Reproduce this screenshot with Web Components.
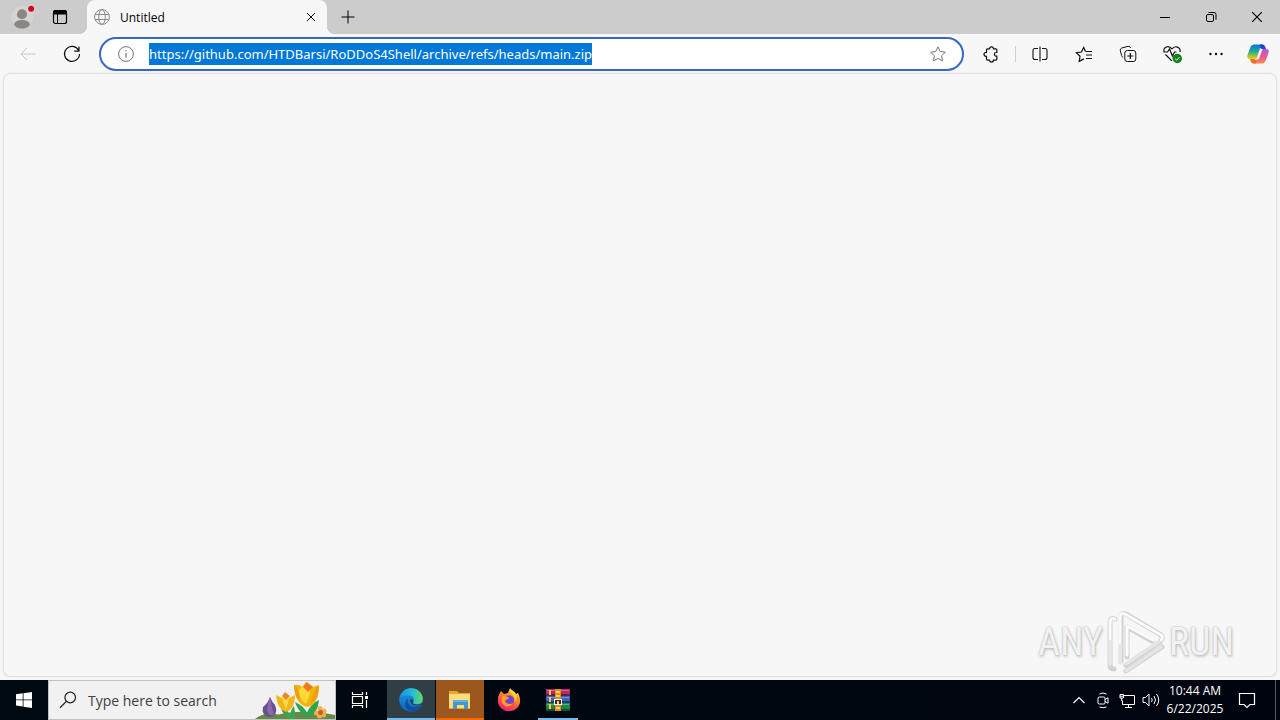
<!DOCTYPE html>
<html lang="en">
<head>
<meta charset="utf-8">
<title>Untitled</title>
<style>
html,body{margin:0;height:100%}
body{font-family:"Segoe UI","Open Sans","Noto Sans",sans-serif;font-size:12px;color:#1b1b1b;overflow:hidden}
</style>
</head>
<body>
<desktop-shell></desktop-shell>
<script>
const define = (name, html, setup) => customElements.define(name, class extends HTMLElement {
  connectedCallback() {
    if (this.shadowRoot) return;
    const t = document.createElement('template');
    t.innerHTML = typeof html === 'function' ? html(this) : html;
    this.attachShadow({mode: 'open'}).append(t.content.cloneNode(true));
    if (setup) setup(this);
  }
});

// Each entry: view box width, drawing, and the view box height when it is not square.
const ICONS = {
  profile: [24, `<g stroke="none"><circle cx="12" cy="12" r="12" fill="#d6d3d1"/><circle cx="12" cy="9" r="5.500" fill="#8a8683"/><ellipse cx="12" cy="20" rx="8.500" ry="4.600" fill="#8a8683"/><circle cx="22" cy="3" r="4.600" fill="#d4d4d4"/><circle cx="22" cy="3" r="3.300" fill="#d00a1e"/></g>`],
  workspace: [16, `<rect x="1.500" y="1.500" width="13" height="13" rx="2" stroke-width="1.200"/><path d="M1.500 2.500q.2-1 1.500-1h10q1.300 0 1.500 1V5h-13z" fill="currentColor"/><path d="M5.500 4.500v10"/>`],
  globe: [16, `<circle cx="8" cy="8" r="7.4"/><ellipse cx="8" cy="8" rx="3.3" ry="7.4"/><path d="M1.200 5.500h13.600M1.200 10.500h13.600"/>`],
  close: [10, `<path d="M1 1l8 8M9 1l-8 8"/>`],
  plus: [14, `<path d="M7 .5v13M.5 7h13"/>`],
  min: [10, `<path d="M0 5.500h10"/>`],
  restore: [12, `<rect x="1.500" y="3.500" width="7" height="7" rx="1.500"/><path d="M3.500 1.500H9a2 2 0 0 1 2 2v5.300"/>`],
  back: [16, `<path d="M15.500 8H1M7 2L1 8l6 6"/>`],
  reload: [18, `<path d="M15.700 5.500A7.500 7.500 0 1 0 16.500 9M16 1.500v4.700h-4.700" stroke-width="1.200"/>`],
  info: [16, `<circle cx="8" cy="8" r="7.400"/><path d="M8 7v4.600M8 4.200v1.400" stroke-width="1.200"/>`],
  star: [16, `<path d="M8 .9l2.200 4.600 5.100.7-3.700 3.500.9 5.200L8 12.400l-4.500 2.500.9-5.200L.7 6.200l5.100-.7z"/>`],
  puzzle: [16, `<path d="M4.500 2.800h2a2 2 0 0 1 4 0h2.300q1 0 1 1v2.700h-.6a1.800 1.800 0 0 0 0 3.600h.6v3q0 1-1 1h-2.300a2 2 0 0 1-4 0h-2q-1 0-1-1v-2.800H3a2 2 0 0 1 0-4h.5V3.800q0-1 1-1z" stroke-width="1.200"/>`],
  split: [16, `<path d="M6 2.500H3q-2 0-2 2v7q0 2 2 2h3M10 2.500h3q2 0 2 2v7q0 2-2 2h-3M8 .5v15" stroke-width="1.100"/>`],
  favs: [18, `<path d="M10.500 6.500L8.700 2.500 6.400 7l-5 .7 3.600 3.600-.8 5 4.600-2.400M10.700 6.500H17M11 10h6M11 13.500h6" stroke-width="1.200"/>`],
  collect: [18, `<path d="M4.200 12.500Q2.900 11.800 2.600 10.500L1.300 5.700Q.9 3.700 2.800 3L9 1.300q1.900-.4 2.600 1.700"/><rect x="5.800" y="5.500" width="11" height="11" rx="2.500"/><path d="M11.300 8v6M8.300 11h6" stroke-width="1.200"/>`],
  heart: [20, `<path d="M10 5C6.500.7 1.100 3 2 8h3.500L7.500 5l3 7 2-4h2M10 5c3-4.300 9-1.700 8 3M3.500 10.500l6.300 6.300" stroke-width="1.200"/><circle cx="15.300" cy="14.500" r="4.700" fill="#12811b" stroke="none"/><path d="M13.100 14.700l1.600 1.500 2.700-3" stroke="#fff"/>`],
  dots: [16, `<g fill="currentColor" stroke="none"><circle cx="2.500" cy="8" r="1.200"/><circle cx="8" cy="8" r="1.200"/><circle cx="13.500" cy="8" r="1.200"/></g>`],
  copilot: [24, `<defs><linearGradient id="a" x2="0" y2="1"><stop stop-color="#0b74db"/><stop offset=".45" stop-color="#14a8aa"/><stop offset=".7" stop-color="#7fbc42"/><stop offset="1" stop-color="#f2cf14"/></linearGradient><linearGradient id="b" x2="0" y2="1"><stop stop-color="#a95bec"/><stop offset=".5" stop-color="#e95598"/><stop offset="1" stop-color="#ff8748"/></linearGradient></defs><g stroke="none"><path d="M17.200 7H15q-2 0-2.600 2L10 18q-.9 3.500-4 3.500h10q2.800 0 3.600-2.700L22.500 11q1.100-4-2.500-4z" fill="url(#b)"/><path d="M6.800 17H9q2 0 2.600-2L14 6q.9-3.500 4-3.500H8Q5.200 2.500 4.400 5.200L1.500 13q-1.100 4 2.500 4z" fill="url(#a)"/><path d="M14 2.500h2.200q2.300 0 3 2.300L20 7h-4q-1.500 0-2.200-2z" fill="#194ac3"/><path d="M10 21.500H7.800q-2.300 0-3-2.300L4 17h4q1.500 0 2.200 2z" fill="#f36a35"/><path d="M13.200 8.500q.5-1.500 2-1.500h1.300l-3.200 9q-.6 1.500-2 1.500H8.500q2 0 2.600-2z" fill="#f7f7f7"/></g>`],
  windows: [16, `<path d="M0 2.200l6.700-.9v6.200H0zM7.500 1.200L16 0v7.500H7.500zM0 8.300h6.700v6.200L0 13.600zM7.500 8.300H16V16l-8.500-1.200z" fill="#fff" stroke="none"/>`],
  search: [18, `<circle cx="11.200" cy="6.500" r="5.300" stroke-width="1.200"/><path d="M7.300 10.400L1 16.700" stroke-width="1.300"/>`],
  flowers: [80, `<g stroke="none"><path d="M0 38Q8 31 24 33.500 47 28 80 34v4z" fill="#658947"/><path d="M35 38Q27 34 26 26q7 3 9 8 1-6 4-9l2 13z" fill="#3ea34e"/><path d="M50 36Q42 28 40 21q9 4 12 11 3-9 12-13-1 12-9 17z" fill="#31a34a"/><path d="M15 16q2 5 5 8 4 11-6 12Q6 34 8 26q5-4 7-10z" fill="#68508c"/><path d="M15 16q1 7 4 18-7 1-7-6 1-6 3-12z" fill="#8b69ae"/><path d="M21 14l6 3 3-5 4 5 6-3q0 14-9 17-9-3-10-17z" fill="#f3b514"/><path d="M27 17l3-4 4 4-3 12z" fill="#ffda48"/><path d="M27 15l3-4 5 4-4 4z" fill="#e9892d"/><path d="M39 4q5-1 8 2l4-5 6 5 7-2q0 20-12 22Q40 23 39 4z" fill="#f5b20b"/><path d="M44 10q4-7 9-7 5 6-2 20-6-4-7-13z" fill="#ffd936"/><path d="M48 6l4-5 6 5-5 5z" fill="#e97c25"/><path d="M39 4q5 2 6 17Q39 15 39 4zM64 4q-5 4-8 18 8-4 8-18z" fill="#e8a011"/><g fill="#f6ad50"><circle cx="65" cy="27.500" r="2.500"/><circle cx="69" cy="30" r="2.500"/><circle cx="68.500" cy="34" r="2.500"/><circle cx="64.500" cy="35" r="2.500"/><circle cx="61.500" cy="32" r="2.500"/></g><circle cx="65.500" cy="31.500" r="2.500" fill="#b96527"/></g>`, 38],
  taskview: [18, `<path d="M1.500 1v2.500h10V1M1.500 17v-2.500h10V17M1.500 5.500h10v7h-10zM15.500 1v3M15.500 9v8" stroke-width="1.200"/><path d="M14 5h3v3h-3z" fill="currentColor" stroke="none"/>`],
  edge: [24, `<defs><linearGradient id="a" x2="1"><stop stop-color="#168de0"/><stop offset=".55" stop-color="#27bdd5"/><stop offset="1" stop-color="#69d65b"/></linearGradient><linearGradient id="b" x2="0" y2="1"><stop stop-color="#1c9de1"/><stop offset="1" stop-color="#0d61bd"/></linearGradient></defs><g stroke="none"><circle cx="12" cy="12" r="11.800" fill="url(#b)"/><path d="M.5 10.500C1.500 4 6 .2 12 .2c7 0 11.800 5 11.800 10.300 0 4-3 6-6.500 6-3 0-4.200-1.200-3-2.500C17 10 12 6.500 8 7.200 4 7.400 1.700 9 .5 10.500z" fill="url(#a)"/><path d="M9 10.500c-2.300 6 4 11.500 13 6.800C19 24 10 25.200 7 19.500c-1.500-3.800-.5-7 2-9z" fill="#124f9b"/><path d="M11.500 10.800c-1.500 5.200 3.800 8.300 12 5.800l.5-1.600c-2 1.500-8.500 2.500-10.100.1.800-1.500.6-3.300-2.400-4.300z" fill="#2f3f45"/></g>`],
  explorer: [24, `<g stroke="none"><path d="M1 3h8l2 2h11v16H1z" fill="#e7a82c"/><path d="M1 6h21v14H1z" fill="#fddc7b"/><path d="M5 12h15v9h-4v-4H9v4H5z" fill="#4296d1"/><path d="M5 12h15v2H5z" fill="#66b2e1"/></g>`],
  firefox: [24, `<defs><linearGradient id="a" x1=".8" x2=".3" y2="1"><stop stop-color="#ffe343"/><stop offset=".4" stop-color="#ff8b25"/><stop offset=".75" stop-color="#ff4055"/><stop offset="1" stop-color="#e11d82"/></linearGradient></defs><g stroke="none"><path d="M4 3l3 3 4-1 2-5c2 3 5 3 6 6l2-1c3 6 3 11-1 15-5 5-13 4-17-1C-.5 14 .5 8 4 3z" fill="url(#a)"/><circle cx="12" cy="12.500" r="5.200" fill="#7743c9"/><path d="M6 8c2 .2 4 0 6 2-1 2-3 1-4 3 1 3 5 4 8 2-1 3-6 5-9 2-3-2-3-6-1-9z" fill="#ff9d24"/><path d="M13 1c0 5 7 6 4 13 5-4 2-9-4-13z" fill="#ffdc38"/></g>`],
  winrar: [24, `<g stroke="none"><path d="M0 1h24v7H0z" fill="#b92866"/><path d="M0 8h24v7H0z" fill="#3b63bc"/><path d="M0 15h24v8H0z" fill="#228447"/><path d="M1 2h22v1H1zM1 9h22v1H1zM1 16h22v1H1z" fill="#fff" opacity=".3"/><path d="M0 6h24v2H0zM0 13h24v2H0zM0 21h24v2H0z" fill="#111b33" opacity=".55"/><path d="M3 2h2v5H3zM3 9h2v5H3zM3 16h2v5H3z" fill="#ffc64c"/><path d="M9 1h6v22H9z" fill="#e28a20"/><path d="M10 3h4v2h-4zM10 7h4v2h-4zM10 19h4v2h-4z" fill="#ffd052"/><path d="M8 11h8v6H8z" fill="#fff"/><path d="M9 12h6v4H9z" fill="#382a27"/><path d="M11 13h2v3h-2z" fill="#f4ce89"/></g>`],
  up: [12, `<path d="M.5 9L6 3.500 11.500 9" stroke-width="1.200"/>`],
  meet: [16, `<rect x="3" y="5" width="7" height="7" rx="1.200"/><path d="M10 7.500l3-1.700v5.400l-3-1.700M4.500 2q3.500-2 7 0M4.500 15q3.500 1.500 7 0"/>`],
  network: [18, `<path d="M6 4.500h10.500v9H4.500V9.500M7 16.500h7M10.500 13.500v3M2 3.500h3.500v3.500H2zM3.700 7v3M2 5.200h3.500"/>`],
  volume: [18, `<path d="M1 6.500h2.500L7 3v12l-3.500-3.500H1zM9.500 7q1.500 2 0 4M12 5q3 4 0 8M14.500 3q4.500 6 0 12"/>`],
  notice: [18, `<path d="M1.500 2.500h15v11H12L9 16.500l-3-3H1.500z" stroke-width="1.200"/>`],
  play: [60, `<g stroke-linejoin="round" stroke-linecap="round"><g stroke="#d2d2d2" stroke-width="5"><path d="M9 8Q4 6 4 12v42q0 4 4 4M15 50V6q0-5 5-3l35 21q3 3 0 5"/><path d="M21 46V16l25 14M54 31L20 54M56 36L20 60"/></g><path d="M9 8Q4 6 4 12v40M14 52V6q0-5 5-3l36 21q3 3 0 5M21 44V15l26 14" stroke="#fbfbfb" stroke-width="3"/><path d="M4 30v24M14 34v18M53 31L20 53M55 36L20 60" stroke="#e6e6e6" stroke-width="3"/></g>`, 62]
};

define('ui-icon', el => {
  const [w, body, h = w] = ICONS[el.getAttribute('name')];
  return `<style>
    :host{display:inline-flex;flex:none;width:var(--size,16px);aspect-ratio:${w}/${h}}
    svg{width:100%;height:100%;overflow:visible;fill:none;stroke:currentColor;stroke-width:1}
  </style><svg viewBox="0 0 ${w} ${h}" aria-hidden="true">${body}</svg>`;
}, el => {
  if (el.hasAttribute('size')) el.style.setProperty('--size', el.getAttribute('size') + 'px');
});

define('icon-button', el => `<style>
  :host{display:flex;flex:none;width:44px}
  button{all:unset;flex:1;display:flex;align-items:center;justify-content:center;box-sizing:border-box;color:inherit}
</style><button type="button" aria-label="${el.getAttribute('label')}"><ui-icon name="${el.getAttribute('icon')}" size="${el.getAttribute('size') || 16}"></ui-icon></button>`);

define('browser-tab', `<style>
  :host{display:flex;flex:0 1 240px;align-items:center;box-sizing:border-box;background:#f7f7f7;border-radius:8px 8px 0 0;padding:0 0 0 7px;position:relative}
  :host::before,:host::after{content:"";position:absolute;bottom:0;width:8px;height:8px}
  :host::before{left:-8px;background:radial-gradient(circle at 0 0,transparent 8px,#f7f7f7 8px)}
  :host::after{right:-8px;background:radial-gradient(circle at 100% 0,transparent 8px,#f7f7f7 8px)}
  .title{flex:1;margin-left:10px}
  .globe{color:#8a8a8a}
  icon-button{width:32px;height:32px}
</style><ui-icon class="globe" name="globe"></ui-icon><span class="title"><slot></slot></span><icon-button icon="close" size="10" label="Close tab"></icon-button>`);

define('title-bar', `<style>
  :host{display:flex;flex:none;height:34px;background:#cccccc;color:#000}
  .lead{display:flex;padding:0 8px 0 3px}
  .lead icon-button{width:38px}
  .new{width:42px}
  .window{display:flex;margin-left:auto}
  .window icon-button{width:46px}
</style>
<div class="lead"><icon-button icon="profile" size="22" label="Profile"></icon-button><icon-button icon="workspace" label="Tab actions"></icon-button></div>
<browser-tab>Untitled</browser-tab>
<icon-button class="new" icon="plus" size="14" label="New tab"></icon-button>
<div class="window"><icon-button icon="min" size="10" label="Minimize"></icon-button><icon-button icon="restore" size="12" label="Restore"></icon-button><icon-button icon="close" size="12" label="Close"></icon-button></div>`);

define('address-bar', `<style>
  :host{display:flex;flex:1;min-width:0;height:34px;box-sizing:border-box;align-items:center;border:2px solid #3566c8;border-radius:17px;background:#fff;padding:0 2px 0 3px;color:#737373}
  input{flex:1;min-width:0;border:0;outline:0;padding:0;margin-left:1px;background:none;font:13px/22px "Segoe UI","Noto Sans","Open Sans",sans-serif;height:22px;color:#1b1b1b}
  input::selection{background:#0078d7;color:#fff}
  icon-button{height:30px}
</style>
<icon-button icon="info" label="View site information"></icon-button>
<input type="text" aria-label="Address" spellcheck="false" value="https://github.com/HTDBarsi/RoDDoS4Shell/archive/refs/heads/main.zip">
<icon-button icon="star" label="Add to favorites"></icon-button>`, el => {
  const field = el.shadowRoot.querySelector('input');
  field.focus({preventScroll: true});
  field.select();
});

define('tool-bar', `<style>
  :host{display:flex;flex:none;height:39px;align-items:center;background:#f7f7f7;padding:0 2px 0 6px;color:#111}
  address-bar{margin:0 5px}
  icon-button{height:36px}
  .off{color:#c6c6c6}
  .rule{flex:none;width:1px;height:16px;margin:0 2px;background:#cfcfcf}
  .last{width:40px}
</style>
<icon-button class="off" icon="back" label="Back"></icon-button>
<icon-button icon="reload" size="18" label="Refresh"></icon-button>
<address-bar></address-bar>
<icon-button icon="puzzle" label="Extensions"></icon-button>
<span class="rule"></span>
<icon-button icon="split" label="Split screen"></icon-button>
<icon-button icon="favs" size="18" label="Favorites"></icon-button>
<icon-button icon="collect" size="18" label="Collections"></icon-button>
<icon-button icon="heart" size="20" label="Browser essentials"></icon-button>
<icon-button icon="dots" label="Settings and more"></icon-button>
<icon-button class="last" icon="copilot" size="24" label="Copilot"></icon-button>`);

define('run-watermark', `<style>
  :host{display:flex;align-items:center;gap:3px;font-family:"Liberation Sans Narrow","Roboto Condensed","Open Sans",sans-serif;font-size:38px;line-height:64px;color:#f2f2f2;text-shadow:0 0 2px #a8a8a8,1px 2px 3px #cacaca}
</style><span>ANY</span><ui-icon name="play" size="60"></ui-icon><span>RUN</span>`);

define('page-view', `<style>
  :host{display:flex;flex:1;min-height:0;box-sizing:border-box;background:#f7f7f7;padding:0 3px 3px}
  main{flex:1;display:flex;align-items:flex-end;justify-content:flex-end;box-sizing:border-box;border:1px solid #e2e2e2;border-radius:8px;background:#f7f7f7;box-shadow:0 0 2px #e0e0e0;padding:0 42px 2px}
</style><main><run-watermark></run-watermark></main>`);

define('task-button', el => `<style>
  :host{display:flex;flex:none;width:48px;height:40px;position:relative;margin-left:1px}
  :host([state=active]){background:#2f3f45}
  :host([state=alert]){background:#9b571e}
  button{all:unset;flex:1;display:flex;align-items:center;justify-content:center}
  .line{position:absolute;left:0;right:0;bottom:0;height:2px;background:#76b9ed}
  :host([state=alert]) .line{background:#f56a05}
  :host([state=open]) .line{left:4px;right:4px}
  :host(:not([state])) .line{display:none}
</style><button type="button" aria-label="${el.getAttribute('label')}"><ui-icon name="${el.getAttribute('icon')}" size="24"></ui-icon></button><span class="line"></span>`);

define('task-search', `<style>
  :host{display:flex;flex:0 1 288px;align-items:center;box-sizing:border-box;height:40px;border:1px solid #c0c0c0;background:#f1f1f1;color:#222;padding-left:10px;overflow:hidden}
  input{flex:1;min-width:0;border:0;outline:0;background:none;padding:2px 0 0;margin-left:11px;font:14px/20px "Segoe UI","Open Sans","Noto Sans",sans-serif}
  input::placeholder{color:#404040;opacity:1}
</style><ui-icon name="search" size="18"></ui-icon><input type="text" aria-label="Search" placeholder="Type here to search"><ui-icon name="flowers" size="80"></ui-icon>`);

define('task-clock', `<style>
  :host{display:flex;flex-direction:column;flex:none;width:64px;justify-content:center;text-align:center;font-size:12px;line-height:18px;white-space:nowrap}
</style><time datetime="2025-06-22T10:44">10:44 AM</time><time datetime="2025-06-22">6/22/2025</time>`);

define('task-bar', `<style>
  :host{display:flex;flex:none;height:40px;background:linear-gradient(90deg,#000b10,#00040e);color:#fff}
  .start,.view{width:48px}
  .apps{display:flex;margin-left:2px}
  .tray{display:flex;margin-left:auto}
  .tray icon-button{width:24px}
  .tray .notice{width:40px}
  .show{width:4px;margin-left:8px;border-left:1px solid #555a61}
</style>
<icon-button class="start" icon="windows" label="Start"></icon-button>
<task-search></task-search>
<icon-button class="view" icon="taskview" size="18" label="Task View"></icon-button>
<div class="apps">
<task-button icon="edge" state="active" label="Microsoft Edge"></task-button>
<task-button icon="explorer" state="alert" label="File Explorer"></task-button>
<task-button icon="firefox" label="Firefox"></task-button>
<task-button icon="winrar" state="open" label="WinRAR"></task-button>
</div>
<div class="tray">
<icon-button icon="up" size="12" label="Show hidden icons"></icon-button>
<icon-button icon="meet" label="Meet Now"></icon-button>
<icon-button icon="network" size="18" label="Network"></icon-button>
<icon-button icon="volume" size="18" label="Volume"></icon-button>
<task-clock></task-clock>
<icon-button class="notice" icon="notice" size="18" label="Notifications"></icon-button>
<span class="show"></span>
</div>`);

define('desktop-shell', `<style>
  :host{display:flex;flex-direction:column;height:100vh;background:#f7f7f7}
</style><title-bar></title-bar><tool-bar></tool-bar><page-view></page-view><task-bar></task-bar>`);
</script>
</body>
</html>
